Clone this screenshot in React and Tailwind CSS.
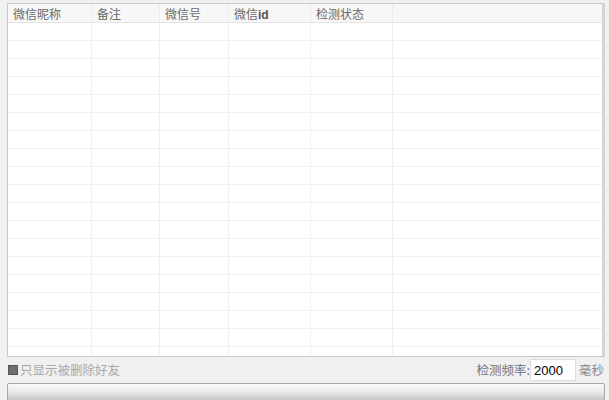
const cols = [
  { label: "微信昵称", w: "w-[84px]" },
  { label: "备注", w: "w-[68px]" },
  { label: "微信号", w: "w-[69px]" },
  { label: "微信id", w: "w-[82px]", id: true },
  { label: "检测状态", w: "w-[82px]" },
];

const rows = Array.from({ length: 19 });

export default function App() {
  return (
    <div className="w-[609px] h-[400px] bg-[#f0f0f0] overflow-hidden font-['Noto_Sans_CJK_SC',sans-serif] text-[12.5px]">
      <div className="pt-[3px] pl-[7px] pr-[4px]">
        {/* list */}
        <div className="h-[354px] bg-white border border-[#c9c9c9] border-r-[3px] border-r-[#d4d4d4] overflow-hidden">
          <div className="flex h-[19px] bg-[#f7f7f7] border-b border-[#e4e4e4] text-[12px]">
            {cols.map((c) => (
              <div
                key={c.label}
                className={`${c.w} shrink-0 border-r border-[#ececec] pl-[5px] leading-[19px] text-[#6a6a6a]`}
              >
                {c.id ? (
                  <>
                    微信<span className="font-['Liberation_Sans',sans-serif] font-bold text-[#555]">id</span>
                  </>
                ) : (
                  c.label
                )}
              </div>
            ))}
            <div className="flex-1" />
          </div>
          {rows.map((_, i) => (
            <div key={i} className="flex h-[18px] border-b border-[#f0f0f0]">
              {cols.map((c) => (
                <div key={c.label} className={`${c.w} shrink-0 border-r border-[#f0f0f0]`} />
              ))}
              <div className="flex-1" />
            </div>
          ))}
        </div>

        {/* options */}
        <div className="flex items-center justify-between h-[26px] pr-[1px]">
          <label className="flex items-center text-[#a9a9a9]">
            <span className="w-[10px] h-[10px] bg-[#6e6e6e] border border-[#555] mr-[2px] ml-[1px]" />
            只显示被删除好友
          </label>
          <div className="flex items-center text-[#6d7587]">
            <span>检测频率:</span>
            <input
              className="w-[46px] h-[22px] bg-white border border-[#dcdcdc] px-[3px] text-black font-['Liberation_Sans',sans-serif] text-[13px] outline-none"
              defaultValue="2000"
            />
            <span className="ml-[3px] text-[#8a8a8a]">毫秒</span>
          </div>
        </div>

        {/* progress */}
        <div className="h-[20px] border border-[#a8a8a8] rounded-[2px] bg-gradient-to-b from-[#fbfbfb] via-[#e6e6e6] to-[#bdbdbd]" />
      </div>
    </div>
  );
}
